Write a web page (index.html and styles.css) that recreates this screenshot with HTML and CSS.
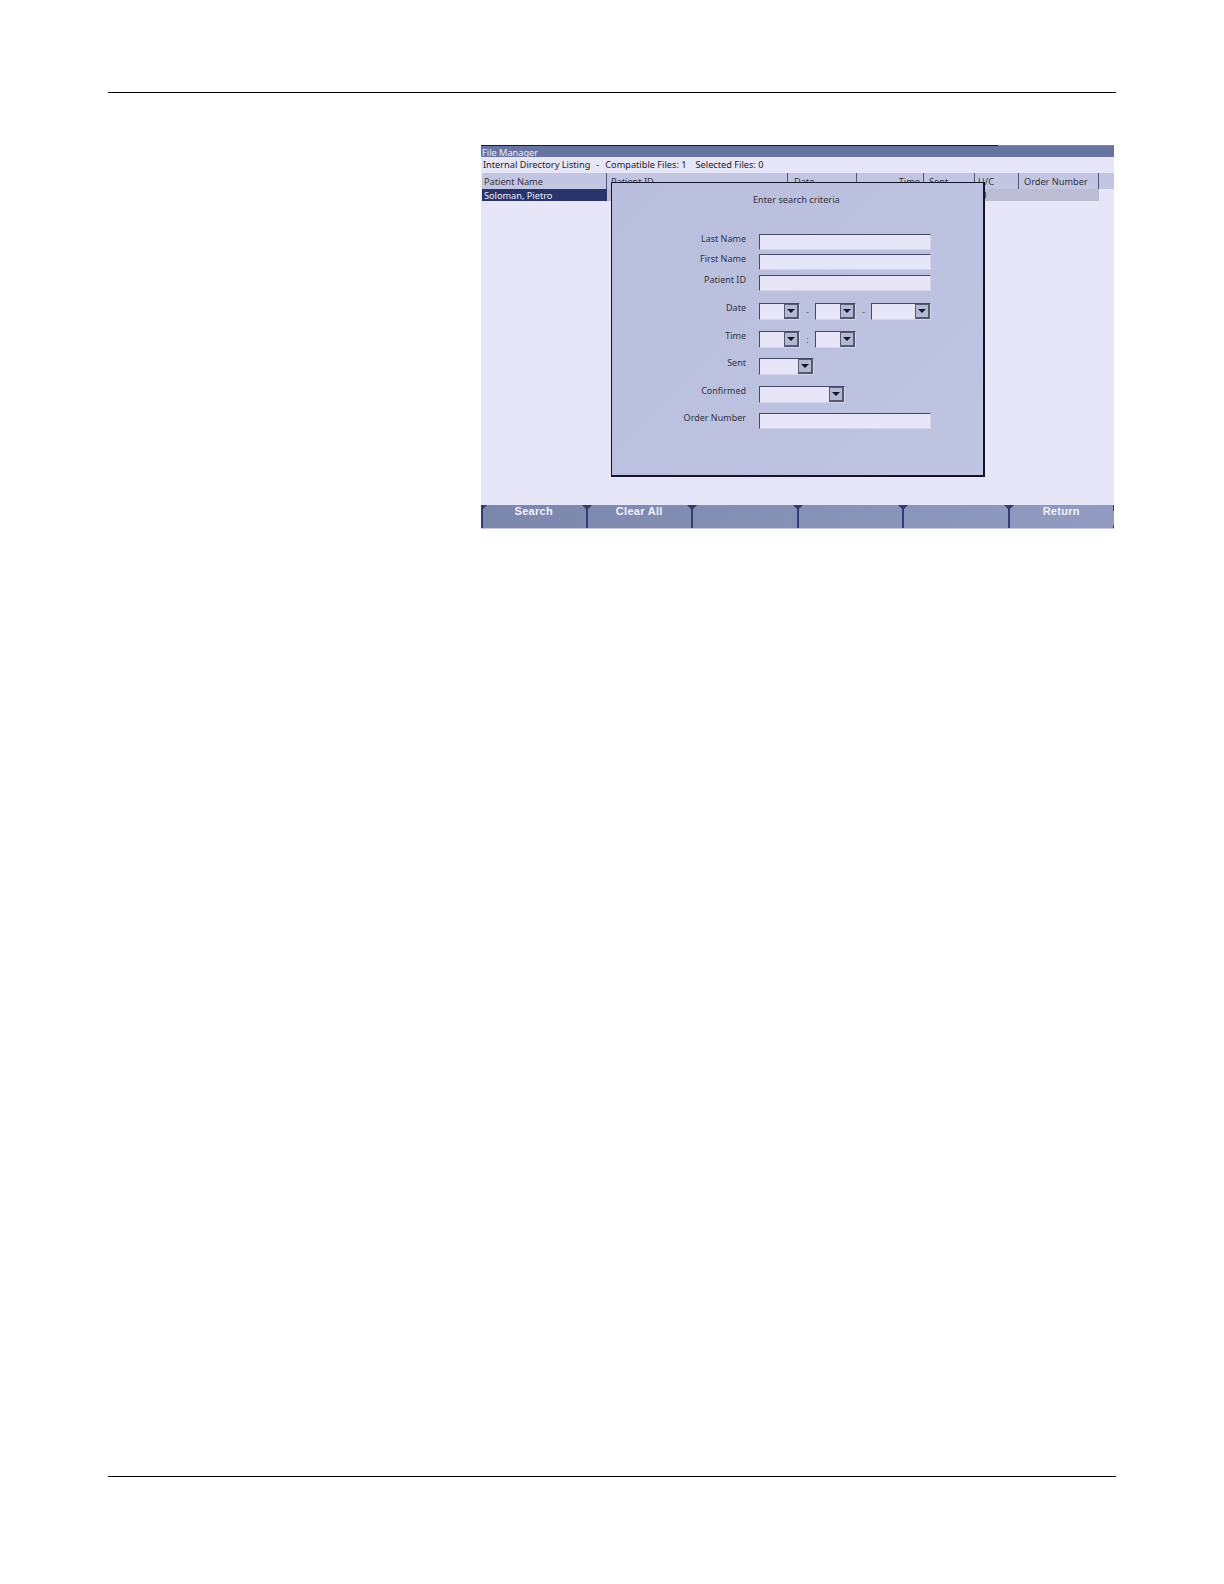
FILE: index.html
```html
<!DOCTYPE html>
<html lang="en">
<head>
  <meta charset="UTF-8">
  <title>File Manager</title>
  <link rel="stylesheet" href="styles.css">
</head>
<body>
  <div class="page">
    <hr class="rule">
    <div class="screen">
      <div class="title-line"></div>
      <div class="title-bar">File Manager</div>
      <div class="info-row">
        <span>Internal Directory Listing</span>
        <span class="dash">-</span>
        <span>Compatible Files: 1</span>
        <span class="selected">Selected Files: 0</span>
      </div>

      <div class="table-head">
        <div class="col col-name">Patient Name</div>
        <div class="col col-id">Patient ID</div>
        <div class="col col-date">Date</div>
        <div class="col col-time">Time</div>
        <div class="col col-sent">Sent</div>
        <div class="col col-uc">U/C</div>
        <div class="col col-order">Order Number</div>
        <div class="col col-rest"></div>
      </div>
      <div class="table-row">
        <div class="cell-name">Soloman, Pietro</div>
        <div class="cell-rest">U</div>
      </div>

      <div class="list-space"></div>

      <div class="softkeys">
        <div class="softkey">Search</div>
        <div class="softkey">Clear All</div>
        <div class="softkey"></div>
        <div class="softkey"></div>
        <div class="softkey"></div>
        <div class="softkey softkey-last">Return</div>
      </div>

      <div class="dialog">
        <div class="dialog-title">Enter search criteria</div>
        <div class="form">
          <label class="form-label">Last Name</label>
          <div class="text-box"></div>

          <label class="form-label">First Name</label>
          <div class="text-box"></div>

          <label class="form-label">Patient ID</label>
          <div class="text-box"></div>

          <label class="form-label">Date</label>
          <div class="select-row">
            <div class="select w41"><span class="arrow"></span></div>
            <span class="sep">-</span>
            <div class="select w41"><span class="arrow"></span></div>
            <span class="sep">-</span>
            <div class="select w60"><span class="arrow"></span></div>
          </div>

          <label class="form-label">Time</label>
          <div class="select-row">
            <div class="select w41"><span class="arrow"></span></div>
            <span class="sep">:</span>
            <div class="select w41"><span class="arrow"></span></div>
          </div>

          <label class="form-label">Sent</label>
          <div class="select-row">
            <div class="select w55"><span class="arrow"></span></div>
          </div>

          <label class="form-label">Confirmed</label>
          <div class="select-row">
            <div class="select w86"><span class="arrow"></span></div>
          </div>

          <label class="form-label">Order Number</label>
          <div class="text-box"></div>
        </div>
      </div>
    </div>
    <hr class="rule rule-bottom">
  </div>
</body>
</html>
```

FILE: styles.css
```css
body {
  margin: 0;
  background: #fff;
  font-family: "Noto Sans", sans-serif;
  font-size: 9.2px;
  color: #33333f;
}
.page {
  padding: 92px 108px 0 108px;
}
.rule {
  margin: 0;
  border: none;
  border-top: 1px solid #000;
}
.rule-bottom {
  margin-top: 947px;
}
.screen {
  position: relative;
  width: 633px;
  height: 384px;
  margin: 52px 0 0 373px;
  background: #e6e6f8;
  display: flex;
  flex-direction: column;
}
.title-line {
  height: 1px;
  background: linear-gradient(to right, #1c1c2c 517px, #7c88b0 517px);
}
.title-bar {
  height: 11px;
  line-height: 13px;
  padding-left: 1px;
  background: #6774a1;
  color: #eef;
}
.info-row {
  height: 16px;
  line-height: 16px;
  padding-left: 2px;
  display: flex;
  color: #222;
}
.dash {
  margin: 0 6px;
}
.selected {
  margin-left: 9px;
}
.table-head {
  height: 16px;
  display: flex;
  margin-left: 1px;
  background: #c2c6e2;
}
.col {
  line-height: 18px;
  padding-left: 2px;
  border-right: 1px solid #50587c;
  box-sizing: border-box;
  overflow: hidden;
}
.col-name { width: 125px; }
.col-id { width: 181px; padding-left: 4px; }
.col-date { width: 69px; padding-left: 6px; }
.col-time { width: 67px; text-align: right; padding-right: 3px; }
.col-sent { width: 51px; padding-left: 5px; }
.col-uc { width: 44px; padding-left: 3px; }
.col-order { width: 80px; padding-left: 5px; }
.col-rest { flex: 1; border-right: none; }
.table-row {
  height: 12px;
  line-height: 13px;
  display: flex;
  margin-left: 1px;
}
.cell-name {
  width: 125px;
  padding-left: 2px;
  box-sizing: border-box;
  background: #27356b;
  color: #eef;
}
.cell-rest {
  width: 492px;
  padding-left: 373px;
  box-sizing: border-box;
  background: #bcbcd2;
}
.list-space {
  flex: 1;
}
.softkeys {
  height: 24px;
  display: flex;
  overflow: hidden;
  background: linear-gradient(100deg, #7a86ab, #929cc2);
  border-bottom: 1px solid #c4c8e4;
  box-sizing: border-box;
}
.softkey {
  flex: 1;
  position: relative;
  text-align: center;
  font-family: "Liberation Sans", sans-serif;
  font-size: 11px;
  font-weight: bold;
  line-height: 12px;
  color: #f2f2fa;
  letter-spacing: 0.3px;
}
/* T shaped dividers between the soft keys */
.softkey::before {
  content: "";
  position: absolute;
  left: -1px;
  top: 1px;
  bottom: 0;
  width: 2px;
  background: #2f3d70;
}
.softkey::after {
  content: "";
  position: absolute;
  left: -5px;
  top: 0;
  border-left: 5px solid transparent;
  border-right: 5px solid transparent;
  border-top: 5px solid #2f3d70;
}
.softkeys .softkey:first-child::before {
  left: 0;
}
.softkeys .softkey:first-child::after {
  left: -4px;
}
.softkey-last {
  background: linear-gradient(#2f3d70 6px, transparent 6px, transparent 20px, #2f3d70 20px) right / 1px 100% no-repeat;
}
.dialog {
  position: absolute;
  left: 130px;
  top: 37px;
  width: 374px;
  height: 295px;
  box-sizing: border-box;
  border: 1px solid #14142a;
  border-right-width: 2px;
  border-bottom-width: 2px;
  background: linear-gradient(135deg, #b8bedc, #bfc4e1);
}
.dialog-title {
  margin: 11px 0 0 141px;
  line-height: 12px;
}
.form {
  display: grid;
  grid-template-columns: 134px 172px;
  grid-template-rows: 20px 21px 28px 28px 27px 28px 27px 17px;
  column-gap: 13px;
  margin-top: 28px;
}
.form-label {
  text-align: right;
  font-size: 9px;
  line-height: 10px;
}
.text-box {
  height: 16px;
  box-sizing: border-box;
  background: #e6e6f8;
  border: 1px solid #d2d4e8;
  border-top: 1px solid #444a66;
  border-left: 1px solid #444a66;
}
.select-row {
  height: 17px;
  display: flex;
  align-items: center;
}
.sep {
  width: 15px;
  text-align: center;
  color: #555;
}
.select {
  height: 17px;
  box-sizing: border-box;
  background: #e6e6f8;
  border: 1px solid #d2d4e8;
  border-top: 1px solid #444a66;
  border-left: 1px solid #444a66;
  display: flex;
  justify-content: flex-end;
}
.w41 { width: 41px; }
.w55 { width: 55px; }
.w60 { width: 60px; }
.w86 { width: 86px; }
.arrow {
  width: 15px;
  box-sizing: border-box;
  background: #b4b8d2;
  border: 1px solid #555a70;
  border-right-width: 2px;
  border-bottom-width: 2px;
  display: flex;
  align-items: center;
  justify-content: center;
}
.arrow::before {
  content: "";
  border-left: 4px solid transparent;
  border-right: 4px solid transparent;
  border-top: 4px solid #14142a;
}
```
